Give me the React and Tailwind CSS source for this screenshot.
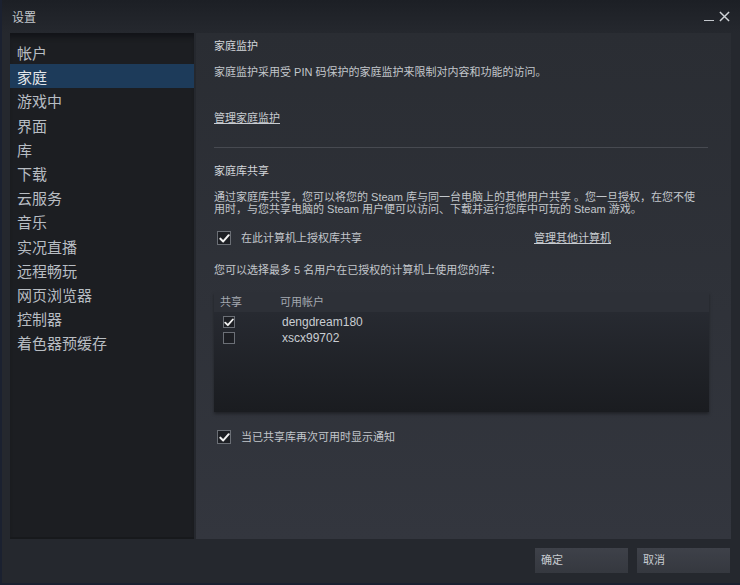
import { useState } from 'react'

const FONT = { fontFamily: '"Liberation Sans", "Noto Sans CJK SC", sans-serif' }

const NAV_ITEMS = [
  '帐户',
  '家庭',
  '游戏中',
  '界面',
  '库',
  '下载',
  '云服务',
  '音乐',
  '实况直播',
  '远程畅玩',
  '网页浏览器',
  '控制器',
  '着色器预缓存',
]

function CheckBox({ checked, onChange, small }) {
  const size = small ? 'w-[12px] h-[12px]' : 'w-[14px] h-[14px]'
  return (
    <button
      type="button"
      onClick={() => onChange?.(!checked)}
      className={`${size} shrink-0 flex items-center justify-center border border-[#6b6f76] bg-[#1d1f24]`}
    >
      {checked && (
        <svg viewBox="0 0 12 12" className="w-[11px] h-[11px]">
          <path d="M1.5 6.2 L4.6 9.2 L10.6 2.4" fill="none" stroke="#f2f2f2" strokeWidth="2.2" strokeLinecap="round" strokeLinejoin="round" />
        </svg>
      )}
    </button>
  )
}

function SharingTable() {
  const [rows, setRows] = useState([
    { name: 'dengdream180', shared: true },
    { name: 'xscx99702', shared: false },
  ])

  const toggle = (i, v) => setRows((r) => r.map((row, j) => (j === i ? { ...row, shared: v } : row)))

  return (
    <div className="mt-[15px] w-[495px] h-[120px] shrink-0 flex flex-col shadow-[0_2px_3px_rgba(0,0,0,0.35)]">
      <div className="h-[20px] flex items-center bg-[#2d3037] text-[11px] text-[#a4a9b0]">
        <span className="w-[66px] pl-[6px]">共享</span>
        <span>可用帐户</span>
      </div>
      <div className="flex-1 bg-gradient-to-b from-[#272a31] to-[#1a1c20] pt-[2px]">
        {rows.map((row, i) => (
          <div key={row.name} className="h-[16px] flex items-center">
            <div className="w-[68px] pl-[9px]">
              <CheckBox small checked={row.shared} onChange={(v) => toggle(i, v)} />
            </div>
            <span className="text-[12px] text-[#c9cdd2]">{row.name}</span>
          </div>
        ))}
      </div>
    </div>
  )
}

export default function App() {
  const [active, setActive] = useState('家庭')
  const [authorize, setAuthorize] = useState(true)
  const [notify, setNotify] = useState(true)

  return (
    <div style={FONT} className="w-[740px] h-[585px] flex flex-col bg-[#25282e] border-l-2 border-b-2 border-[#1b2130] overflow-hidden">
      {/* title bar */}
      <div className="h-[33px] shrink-0 flex items-start justify-between bg-gradient-to-b from-[#1c1f25] to-[#25282e]">
        <span className="pl-[10px] pt-[9px] text-[12px] text-[#c3c7cc]">设置</span>
        <div className="flex items-start pt-[8px] pr-[10px] text-[#c3c7cc]">
          <span className="w-[10px] h-[1px] mt-[12px] mr-[5px] bg-[#c3c7cc]" />
          <svg viewBox="0 0 12 12" className="w-[11px] h-[11px] mt-[3px]">
            <path d="M1 1 L11 11 M11 1 L1 11" stroke="#cfd3d7" strokeWidth="1.6" />
          </svg>
        </div>
      </div>

      <div className="flex h-[506px] shrink-0 pl-[8px] pr-[9px] gap-[2px]">
        {/* settings navigation */}
        <div className="w-[184px] flex flex-col pt-[7px] bg-[#1c1e22] shadow-[inset_0_7px_5px_-3px_#121418] border-b-2 border-[#17191c]">
          {NAV_ITEMS.map((item) => (
            <button
              key={item}
              type="button"
              onClick={() => setActive(item)}
              className={`h-[24.2px] pl-[7px] pt-[2px] text-left text-[15px] leading-[24px] ${
                active === item ? 'bg-[#1d3b5a] text-[#e4e7ea]' : 'text-[#b8bdc3]'
              }`}
            >
              {item}
            </button>
          ))}
        </div>

        {/* family settings page */}
        <div className="flex-1 flex flex-col pl-[18px] pt-[6px] bg-gradient-to-b from-[#2a2d33] to-[#33363e] text-[11px] leading-[14px] text-[#c2c6cb]">
          <div className="text-[#d3d6da]">家庭监护</div>
          <div className="mt-[12px]">家庭监护采用受 PIN 码保护的家庭监护来限制对内容和功能的访问。</div>
          <a href="#" className="mt-[32px] w-fit underline text-[#c8ccd1]">管理家庭监护</a>
          <div className="mt-[22px] w-[494px] h-[1px] shrink-0 bg-[#474a51]" />

          <div className="mt-[16px] text-[#d3d6da]">家庭库共享</div>
          <div className="mt-[13px] w-[484px] leading-[12px]">
            通过家庭库共享，您可以将您的 Steam 库与同一台电脑上的其他用户共享 。您一旦授权，在您不使用时，与您共享电脑的 Steam 用户便可以访问、下载并运行您库中可玩的 Steam 游戏。
          </div>
          <div className="mt-[15px] flex items-center h-[16px] shrink-0">
            <div className="pl-[3px] w-[27px]">
              <CheckBox checked={authorize} onChange={setAuthorize} />
            </div>
            <span className="w-[293px]">在此计算机上授权库共享</span>
            <a href="#" className="underline text-[#c8ccd1]">管理其他计算机</a>
          </div>
          <div className="mt-[17px]">您可以选择最多 5 名用户在已授权的计算机上使用您的库：</div>

          <SharingTable />

          <div className="mt-[17px] flex items-center h-[16px] shrink-0">
            <div className="pl-[3px] w-[27px]">
              <CheckBox checked={notify} onChange={setNotify} />
            </div>
            <span>当已共享库再次可用时显示通知</span>
          </div>
        </div>
      </div>

      {/* dialog buttons */}
      <div className="flex-1 flex justify-end items-start gap-[9px] pt-[9px] pr-[10px]">
        {['确定', '取消'].map((label) => (
          <button
            key={label}
            type="button"
            className="w-[93px] h-[25px] pl-[6px] text-left text-[11px] text-[#c8ccd1] bg-gradient-to-b from-[#3e4149] to-[#35383f]"
          >
            {label}
          </button>
        ))}
      </div>
    </div>
  )
}
